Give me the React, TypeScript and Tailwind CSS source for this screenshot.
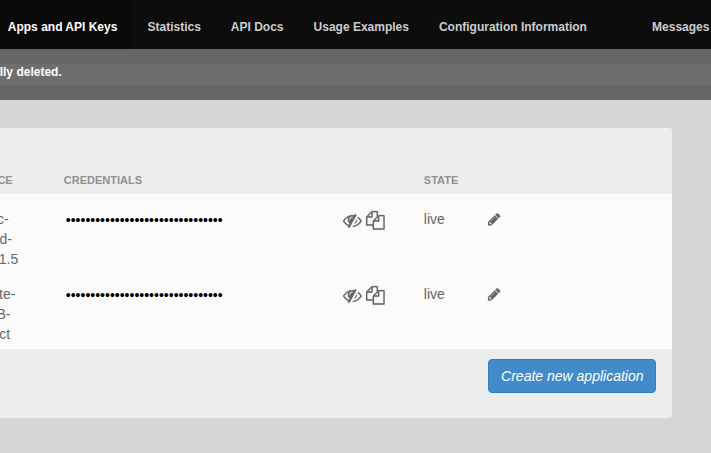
import type { ReactNode } from 'react';

const navItems = ['Statistics', 'API Docs', 'Usage Examples', 'Configuration Information'];

const rows = [
  {
    resource: [
      { text: 'c-', shift: '-ml-[3px]' },
      { text: 'd-', shift: '-ml-[0.5px]' },
      { text: '1.5', shift: '-ml-[1.3px]' },
    ],
    state: 'live',
  },
  {
    resource: [
      { text: 'te-', shift: '-ml-[1px]' },
      { text: 'B-', shift: '-ml-[3.6px]' },
      { text: 'ct', shift: '-ml-[0.7px]' },
    ],
    state: 'live',
  },
];

function Icon({ d, className }: { d: string; className: string }) {
  return (
    <svg viewBox="0 0 1792 1792" fill="currentColor" stroke="currentColor" className={`shrink-0 overflow-visible ${className}`}>
      <path d={d} />
    </svg>
  );
}

const EYE_SLASH =
  'M555 1335l78-141q-87-63-136-159t-49-203q0-121 61-225-229 117-381 353 167 258 427 375zm389-759q0-20-14-34t-34-14q-125 0-214.5 89.5t-89.5 214.5q0 20 14 34t34 14 34-14 14-34q0-86 61-147t147-61q20 0 34-14t14-34zm363-191q0 7-1 9-106 189-316 567t-315 566l-49 89q-10 16-28 16-12 0-134-70-16-10-16-28 0-12 44-87-143-65-263.5-173t-208.5-245q-20-31-20-69t20-69q153-235 380-371t496-136q89 0 180 17l54-97q10-16 28-16 5 0 18 6t31 15.5 33 18.5 31.5 18.5 19.5 11.5q16 10 16 27zm37 447q0 139-79 253.5t-209 164.5l280-502q8 45 8 84zm448 128q0 35-20 69-39 64-109 145-150 172-347.5 267t-419.5 95l74-132q212-18 392.5-137t301.5-307q-115-179-282-294l63-112q95 64 182.5 153t144.5 184q20 34 20 69z';
const FILES =
  'M1696 384q40 0 68 28t28 68v1216q0 40-28 68t-68 28h-960q-40 0-68-28t-28-68v-288h-544q-40 0-68-28t-28-68v-672q0-40 20-88t48-76l408-408q28-28 76-48t88-20h416q40 0 68 28t28 68v328q68-40 128-40h416zm-544 213l-299 299h299v-299zm-640-384l-299 299h299v-299zm196 647l316-316v-416h-384v416q0 40-28 68t-68 28h-416v640h512v-256q0-40 20-88t48-76zm956 804v-1152h-384v416q0 40-28 68t-68 28h-416v640h896z';
const PENCIL =
  'M491 1536l91-91-235-235-91 91v107h128v128h107zm523-928q0-22-22-22-10 0-17 7l-542 542q-7 7-7 17 0 22 22 22 10 0 17-7l542-542q7-7 7-17zm-54-192l416 416-832 832h-416v-416zm683 96q0 53-37 90l-166 166-416-416 166-165q36-38 90-38 53 0 91 38l235 234q37 39 37 91z';

function HeaderCell({ children }: { children: ReactNode }) {
  return <span className="text-[11px] leading-4 font-bold text-[#919191]">{children}</span>;
}

export default function App() {
  return (
    <div className="flex h-[453px] w-[711px] flex-col overflow-hidden bg-[#d6d6d6] font-['Liberation_Sans',Arial,sans-serif] text-sm leading-5 text-[#666]">
      <nav className="flex h-[49px] shrink-0 bg-[#0d0d0d] text-xs font-bold whitespace-nowrap text-[#ccc]">
        <a className="w-[132px] bg-[#0a0a0a] pt-[19px] pl-[7.8px] text-white">Apps and API Keys</a>
        <div className="flex gap-[30px] pt-[19px] pl-[15.5px]">
          {navItems.map((item) => (
            <a key={item}>{item}</a>
          ))}
        </div>
        <a className="ml-auto pt-[19px] pr-[1.6px]">Messages</a>
      </nav>

      <div className="h-[51px] shrink-0 bg-[#666] py-[15px]">
        <p className="h-[21px] bg-[#6e6e6e] text-xs leading-[17px] font-bold text-white">
          <span className="-ml-[0.3px]">lly deleted.</span>
        </p>
      </div>

      <main className="mt-7 h-[290px] w-[672px] overflow-hidden rounded-r-[3px] bg-[#ededed]">
        <div className="grid h-[66px] grid-cols-[63.8px_360px_64px_1fr] items-end pb-[6px]">
          <span className="flex w-[12.7px] justify-end overflow-hidden">
            <HeaderCell>RESOURCE</HeaderCell>
          </span>
          <HeaderCell>CREDENTIALS</HeaderCell>
          <HeaderCell>STATE</HeaderCell>
        </div>

        <div className="h-[155px] bg-[#fbfbfb] pt-[15px]">
          {rows.map((row, index) => (
            <div key={index} className="grid h-[75px] grid-cols-[63.8px_279.5px_80.5px_64.2px_1fr]">
              <div className="flex flex-col items-start">
                {row.resource.map(({ text, shift }) => (
                  <span key={text} className={shift}>
                    {text}
                  </span>
                ))}
              </div>
              <input
                type="password"
                readOnly
                aria-label="Credentials"
                value="00000000000000000000000000000000"
                className="h-[22px] w-[240px] bg-transparent px-[2px] font-['Liberation_Sans',Arial,sans-serif] text-sm text-black outline-none"
              />
              <div className="flex gap-[4px] pt-[2px]">
                <Icon d={EYE_SLASH} className="size-[18.7px] stroke-[12]" />
                <Icon d={FILES} className="size-[18.7px] stroke-[20]" />
              </div>
              <span>{row.state}</span>
              <Icon d={PENCIL} className="-ml-[1px] mt-[2.5px] size-[14.5px] stroke-[20]" />
            </div>
          ))}
        </div>

        <div className="flex justify-end pt-[10px] pr-4">
          <button className="h-[34px] w-[168px] rounded-[4px] border border-[#357ebd] bg-[#428bca] pl-[0.6px] text-sm whitespace-nowrap text-white italic">
            Create new application
          </button>
        </div>
      </main>
    </div>
  );
}
